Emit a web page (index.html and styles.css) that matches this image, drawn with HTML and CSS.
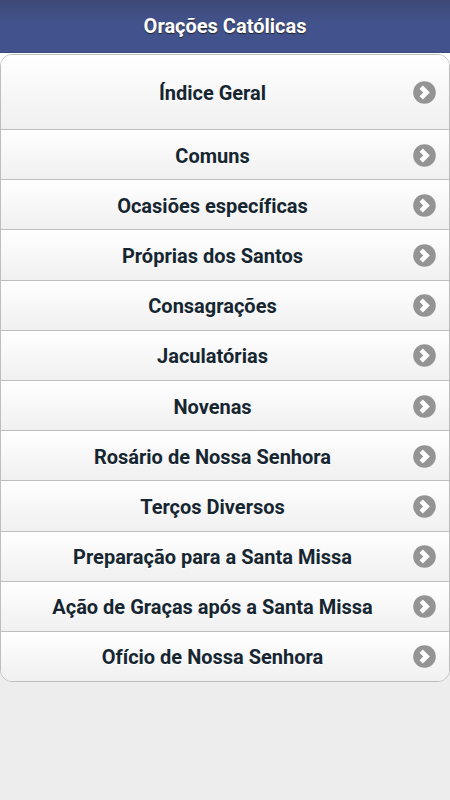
FILE: index.html
```html
<!DOCTYPE html>
<html lang="pt">
<head>
<meta charset="utf-8">
<title>Orações Católicas</title>
<link rel="stylesheet" href="styles.css">
</head>
<body>
<svg class="defs" width="0" height="0" aria-hidden="true">
  <symbol id="arrow" viewBox="0 0 23 23">
    <circle cx="11.5" cy="11.5" r="11.3" fill="#949494"/>
    <path d="M8.2 6.2 L13.5 11.5 L8.2 16.8" fill="none" stroke="#fff" stroke-width="4.7"/>
  </symbol>
</svg>
<header class="header"><h1 class="title">Orações Católicas</h1></header>
<ul class="list">
  <li class="row row-first"><span class="label">Índice Geral</span><svg class="icon"><use href="#arrow"/></svg></li>
  <li class="row"><span class="label">Comuns</span><svg class="icon"><use href="#arrow"/></svg></li>
  <li class="row"><span class="label">Ocasiões específicas</span><svg class="icon"><use href="#arrow"/></svg></li>
  <li class="row"><span class="label">Próprias dos Santos</span><svg class="icon"><use href="#arrow"/></svg></li>
  <li class="row"><span class="label">Consagrações</span><svg class="icon"><use href="#arrow"/></svg></li>
  <li class="row"><span class="label">Jaculatórias</span><svg class="icon"><use href="#arrow"/></svg></li>
  <li class="row"><span class="label">Novenas</span><svg class="icon"><use href="#arrow"/></svg></li>
  <li class="row"><span class="label">Rosário de Nossa Senhora</span><svg class="icon"><use href="#arrow"/></svg></li>
  <li class="row"><span class="label">Terços Diversos</span><svg class="icon"><use href="#arrow"/></svg></li>
  <li class="row"><span class="label">Preparação para a Santa Missa</span><svg class="icon"><use href="#arrow"/></svg></li>
  <li class="row"><span class="label">Ação de Graças após a Santa Missa</span><svg class="icon"><use href="#arrow"/></svg></li>
  <li class="row"><span class="label">Ofício de Nossa Senhora</span><svg class="icon"><use href="#arrow"/></svg></li>
</ul>
</body>
</html>
```
FILE: styles.css
```css
* { box-sizing: border-box; }
html { height: 100%; }
body {
  margin: 0;
  min-height: 100%;
  overflow: hidden;
  background: linear-gradient(#fff 0, #fff 60px, #ededed 690px, #ededed 100%);
  font-family: Roboto, sans-serif;
  font-variant-ligatures: none;
}
.defs { display: block; }
.header {
  height: 53px;
  display: flex;
  align-items: center;
  justify-content: center;
  background: linear-gradient(#3f4975 0, #404e83 12px, #42528c 24px);
  border-bottom: 1px solid #3c4b7e;
}
.title {
  margin: 0;
  color: #fff;
  font-size: 20px;
  font-weight: 700;
  line-height: 24px;
  text-shadow: 0 1px 1px #222;
}
.list {
  list-style: none;
  margin: 1px 0 0;
  padding: 0;
  height: 628px;
  border: 1px solid #bebebe;
  border-radius: 12px;
  overflow: hidden;
  display: flex;
  flex-direction: column;
}
.row {
  flex: 1 1 0;
  display: flex;
  align-items: center;
  border-top: 1px solid #bebebe;
  padding: 1px 13px 0 15px;
  background: linear-gradient(#fff, #f0f0f0);
}
.row-first { flex: 0 0 74px; border-top: 0; }
.label {
  flex: 1;
  padding-top: 1px;
  text-align: center;
  color: #162631;
  font-size: 20px;
  font-weight: 700;
  line-height: 24px;
  white-space: nowrap;
  text-shadow: 0 1px 0 #fff;
}
.row-first .label { padding-top: 0; }
.icon { flex: none; width: 23px; height: 23px; margin-left: 4px; }
```
